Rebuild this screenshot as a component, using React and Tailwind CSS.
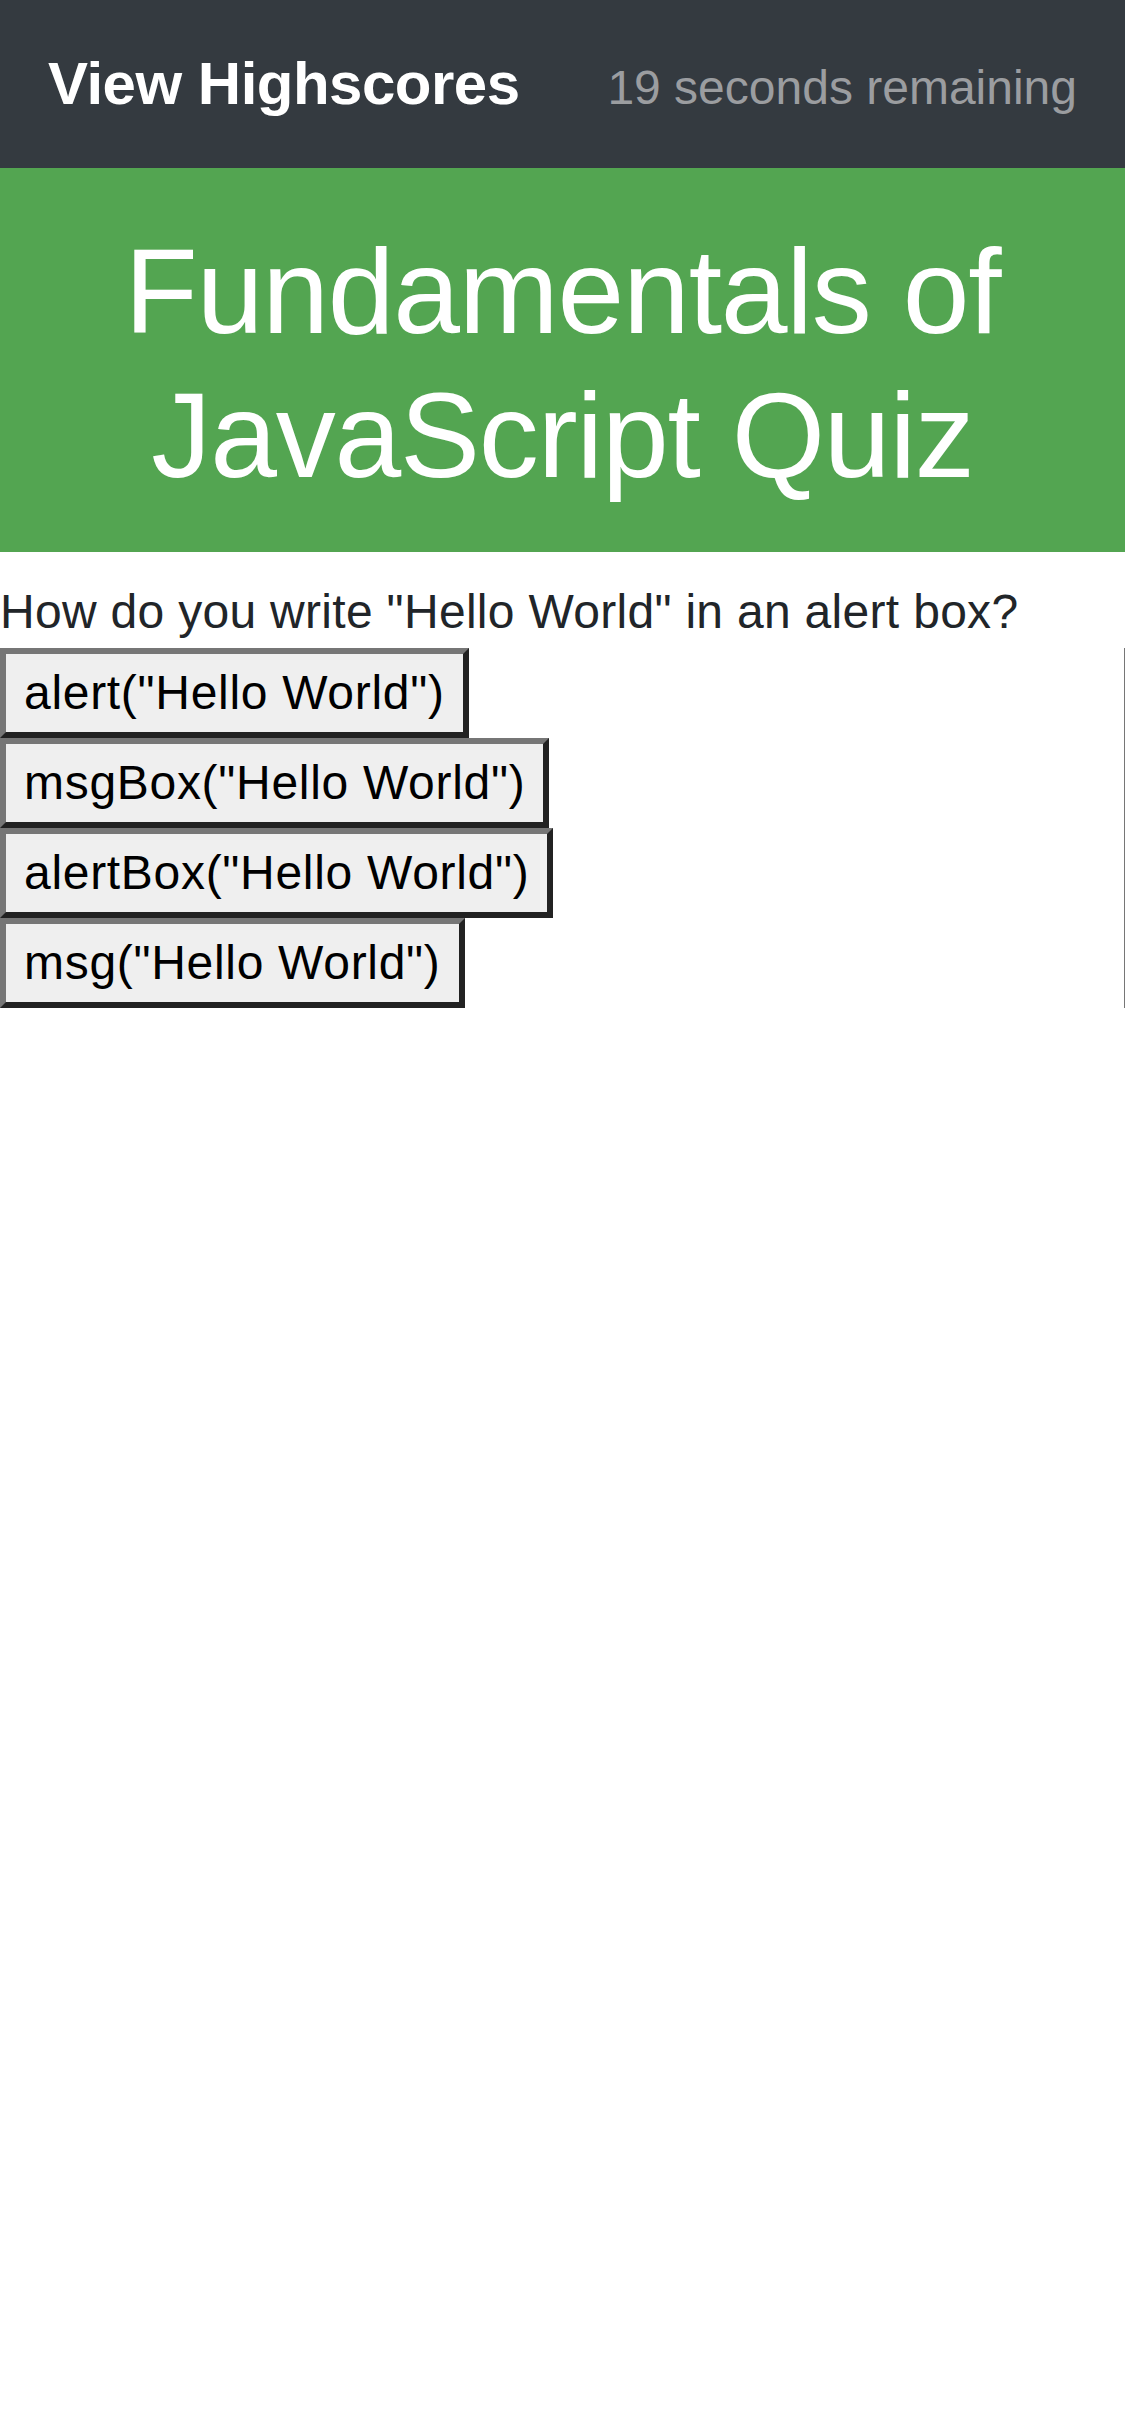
import React from "react";

const answers = [
  'alert("Hello World")',
  'msgBox("Hello World")',
  'alertBox("Hello World")',
  'msg("Hello World")',
];

export default function App() {
  return (
    <div
      className="min-h-screen bg-white"
      style={{ fontFamily: '"Liberation Sans", Arial, sans-serif' }}
    >
      {/* NAVBAR */}
      <nav className="h-[168px] bg-[#343a40] px-[48px] flex items-center">
        <div className="w-full flex items-baseline justify-between">
          <a className="text-[60px] font-bold text-white tracking-[-0.5px] leading-none">
            View Highscores
          </a>
          <span className="text-[48px] text-[#9b9da0] leading-none">
            19 seconds remaining
          </span>
        </div>
      </nav>

      {/* TITLE */}
      <header className="bg-[#53a551] pt-[51px] pb-[45px]">
        <h1 className="text-center text-white text-[120px] leading-[144px] tracking-[-1.2px]">
          Fundamentals of
          <br />
          JavaScript Quiz
        </h1>
      </header>

      {/* QUESTION */}
      <div className="mt-[24px] text-[48px] leading-[72px] text-[#212529]">
        <p className="tracking-[0.3px]">How do you write "Hello World" in an alert box?</p>

        <div className="flex flex-col items-start border-r border-[#767676]">
          {answers.map((a) => (
            <button
              key={a}
              className="bg-[#efefef] text-black text-[48px] leading-[72px] px-[18px] py-[3px] border-[6px] border-t-[#767676] border-l-[#767676] border-b-[#222222] border-r-[#222222] tracking-[0.7px]"
            >
              {a}
            </button>
          ))}
        </div>
      </div>
    </div>
  );
}
